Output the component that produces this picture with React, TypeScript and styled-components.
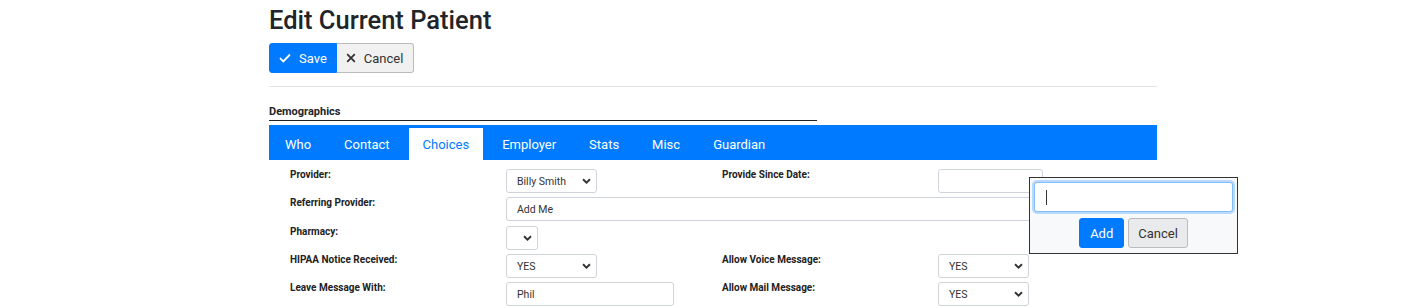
import React from "react";
import styled, { createGlobalStyle } from "styled-components";

const Global = createGlobalStyle`
  html, body { margin: 0; padding: 0; background: #fff; }
  body { font-family: Roboto, "Liberation Sans", Arial, sans-serif; color: #212529; }
  * { box-sizing: border-box; }
`;

const Page = styled.div`
  width: 888px;
  margin-left: 269px;
  padding-top: 4px;
`;

const Title = styled.h1`
  margin: 0;
  font-size: 25.5px;
  font-weight: 500;
  line-height: 32px;
  color: #212529;
`;

const Toolbar = styled.div`
  display: flex;
  margin-top: 7px;
  height: 30px;
`;

const ToolButton = styled.button<{ $primary?: boolean }>`
  display: flex;
  align-items: center;
  gap: 8px;
  height: 30px;
  padding: 0 ${(p) => (p.$primary ? "9px" : "10px")} 0 9px;
  font-family: Roboto, "Liberation Sans", Arial, sans-serif;
  font-size: 13px;
  border: 1px solid ${(p) => (p.$primary ? "#007bff" : "#b9bcbf")};
  background: ${(p) => (p.$primary ? "#007bff" : "#f1f1f1")};
  color: ${(p) => (p.$primary ? "#fff" : "#333")};
  border-radius: ${(p) => (p.$primary ? "3px 0 0 3px" : "0 3px 3px 0")};
  ${(p) => (p.$primary ? "" : "border-left: none;")}
  cursor: pointer;
`;

const Rule = styled.div`
  height: 1px;
  background: #e3e3e3;
  margin-top: 13px;
`;

const SectionTitle = styled.div`
  width: 548px;
  margin-top: 17px;
  font-size: 11px;
  font-weight: 700;
  line-height: 14px;
  padding-top: 1px;
  padding-bottom: 1px;
  border-bottom: 1px solid #222;
`;

const TabBar = styled.div`
  display: flex;
  margin-top: 4px;
  height: 35px;
  background: #007bff;
  padding-left: 2px;
  gap: 5px;
`;

const Tab = styled.div<{ $active?: boolean }>`
  margin-top: 3px;
  height: 32px;
  padding: 0 14px;
  display: flex;
  align-items: center;
  font-size: 13px;
  color: ${(p) => (p.$active ? "#007bff" : "#fff")};
  background: ${(p) => (p.$active ? "#fff" : "transparent")};
`;

const Form = styled.div`
  display: grid;
  grid-template-columns: repeat(4, 216px);
  grid-template-rows: 28px 29px 28px 28px 28px;
  padding: 9px 0 0 21px;
`;

const Label = styled.div`
  font-size: 10px;
  font-weight: 700;
  line-height: 12px;
  color: #222;
`;

const Cell = styled.div<{ $span?: number }>`
  grid-column: span ${(p) => p.$span ?? 1};
`;

const SelectBox = styled.div<{ $w: number }>`
  width: ${(p) => p.$w}px;
  height: 24px;
  border: 1px solid #ced4da;
  border-radius: 3px;
  display: flex;
  align-items: center;
  justify-content: space-between;
  padding: 0 5px 0 10px;
  font-size: 10.5px;
  color: #333;
  background: #fff;
`;

const TextBox = styled.div<{ $w?: number }>`
  width: ${(p) => (p.$w ? `${p.$w}px` : "100%")};
  height: 24px;
  border: 1px solid #ced4da;
  border-radius: 3px;
  display: flex;
  align-items: center;
  padding: 0 10px;
  font-size: 10.5px;
  color: #333;
  background: #fff;
`;

const Wrap = styled.div`
  position: relative;
`;

const Popup = styled.div`
  position: absolute;
  left: 1029px;
  top: 177px;
  width: 209px;
  height: 77px;
  border: 1px solid #333;
  background: #f8f9fa;
  padding: 4px;
`;

const PopInput = styled.div`
  height: 30px;
  border: 1px solid #80bdff;
  border-radius: 3px;
  box-shadow: 0 0 0 2px rgba(0, 123, 255, 0.25);
  background: #fff;
  display: flex;
  align-items: center;
  padding-left: 11px;
`;

const Caret = styled.span`
  width: 1px;
  height: 15px;
  background: #333;
`;

const PopActions = styled.div`
  display: flex;
  justify-content: center;
  gap: 4px;
  margin-top: 6px;
`;

const PopButton = styled.button<{ $primary?: boolean }>`
  height: 30px;
  padding: 0 ${(p) => (p.$primary ? "10px" : "9px")};
  font-family: Roboto, "Liberation Sans", Arial, sans-serif;
  font-size: 13px;
  border-radius: 3px;
  border: 1px solid ${(p) => (p.$primary ? "#007bff" : "#bbb")};
  background: ${(p) => (p.$primary ? "#007bff" : "#e9eaeb")};
  color: ${(p) => (p.$primary ? "#fff" : "#333")};
`;

const Chevron = () => (
  <svg width="9" height="6" viewBox="0 0 9 6">
    <path d="M1 1.2 L4.5 4.6 L8 1.2" fill="none" stroke="#333" strokeWidth="1.9" />
  </svg>
);

const Select = ({ w, value }: { w: number; value?: string }) => (
  <SelectBox $w={w}>
    <span>{value}</span>
    <Chevron />
  </SelectBox>
);

export default function App() {
  const tabs = ["Who", "Contact", "Choices", "Employer", "Stats", "Misc", "Guardian"];
  return (
    <Wrap>
      <Global />
      <Page>
        <Title>Edit Current Patient</Title>
        <Toolbar>
          <ToolButton $primary>
            <svg width="12" height="10" viewBox="0 0 12 10">
              <path d="M1 5.2 L4.3 8.4 L11 1.5" fill="none" stroke="#fff" strokeWidth="1.8" />
            </svg>
            Save
          </ToolButton>
          <ToolButton>
            <svg width="10" height="10" viewBox="0 0 10 10">
              <path d="M1.2 1.2 L8.8 8.8 M8.8 1.2 L1.2 8.8" stroke="#333" strokeWidth="1.8" />
            </svg>
            Cancel
          </ToolButton>
        </Toolbar>
        <Rule />
        <SectionTitle>Demographics</SectionTitle>
        <TabBar>
          {tabs.map((t) => (
            <Tab key={t} $active={t === "Choices"}>
              {t}
            </Tab>
          ))}
        </TabBar>
        <Form>
          <Label>Provider:</Label>
          <Cell>
            <Select w={91} value="Billy Smith" />
          </Cell>
          <Label>Provide Since Date:</Label>
          <Cell>
            <TextBox $w={105} />
          </Cell>

          <Label>Referring Provider:</Label>
          <Cell $span={3}>
            <TextBox>Add Me</TextBox>
          </Cell>

          <Label>Pharmacy:</Label>
          <Cell $span={3}>
            <Select w={32} />
          </Cell>

          <Label>HIPAA Notice Received:</Label>
          <Cell>
            <Select w={91} value="YES" />
          </Cell>
          <Label>Allow Voice Message:</Label>
          <Cell>
            <Select w={91} value="YES" />
          </Cell>

          <Label>Leave Message With:</Label>
          <Cell>
            <TextBox $w={168}>Phil</TextBox>
          </Cell>
          <Label>Allow Mail Message:</Label>
          <Cell>
            <Select w={91} value="YES" />
          </Cell>
        </Form>
      </Page>
      <Popup>
        <PopInput>
          <Caret />
        </PopInput>
        <PopActions>
          <PopButton $primary>Add</PopButton>
          <PopButton>Cancel</PopButton>
        </PopActions>
      </Popup>
    </Wrap>
  );
}
